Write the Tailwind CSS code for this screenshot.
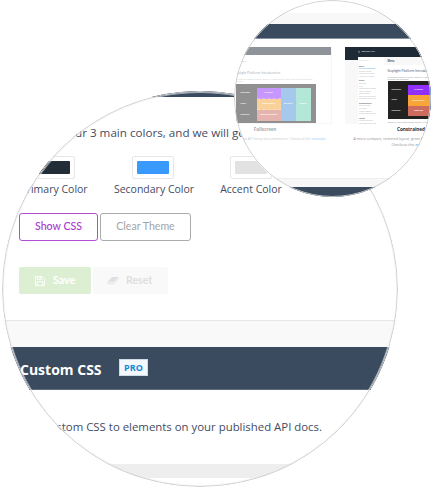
<!DOCTYPE html>
<html lang="en">
<head>
<meta charset="utf-8">
<title>Theme settings</title>
<script src="https://cdn.jsdelivr.net/npm/@tailwindcss/browser@4"></script>
</head>
<body class="bg-white w-[431px] h-[489px] overflow-hidden relative font-['Open_Sans','Noto_Sans',sans-serif] text-[#434c5f]">

<!-- Theme colours and custom CSS -->
<section class="absolute left-[2px] top-[91px] size-[396px] rounded-full overflow-hidden bg-white">
  <div class="flex flex-col w-[396px] whitespace-nowrap">
    <div class="h-[6px] bg-[#3a4b60]"></div>
    <p class="h-[59px] pt-[27px] pl-[19px] text-[11.65px] leading-[17px] flex"><span class="w-[54px] flex justify-end shrink-0">Pick yo</span><span>ur 3 main colors, and we will generate</span></p>
    <div class="flex gap-[26.5px] pl-[18.5px] h-[57px] text-[10.5px] leading-[16px]">
      <div class="w-[66px] flex flex-col items-center">
        <div class="w-[42px] h-[23px] border border-[#e6e6e6] rounded-[2px] p-[4px]"><div class="h-full rounded-[1px] bg-[#222d38]"></div></div>
        <span class="mt-[2px] pl-[1px]">Primary Color</span>
      </div>
      <div class="w-[80px] flex flex-col items-center">
        <div class="w-[42px] h-[23px] border border-[#e6e6e6] rounded-[2px] p-[4px]"><div class="h-full rounded-[1px] bg-[#3a99fc]"></div></div>
        <span class="mt-[2px] pl-[2px]">Secondary Color</span>
      </div>
      <div class="w-[62px] flex flex-col items-center">
        <div class="w-[42px] h-[23px] border border-[#e6e6e6] rounded-[2px] p-[4px]"><div class="h-full rounded-[1px] bg-[#e2e2e2]"></div></div>
        <span class="mt-[2px] pl-[1px]">Accent Color</span>
      </div>
    </div>
    <div class="flex gap-[2px] pl-[17px] h-[54px] font-['Lato',sans-serif] text-[10.6px]">
      <button class="w-[79px] h-[28px] rounded-[3px] border border-[#b04fd2] text-[#a937cd] font-medium">Show CSS</button>
      <button class="w-[91px] h-[28px] rounded-[3px] border border-[#a9abad] text-[#a3a5a8]">Clear Theme</button>
    </div>
    <div class="flex gap-[2px] pl-[17px] h-[53px] font-['Lato',sans-serif] text-[10.6px] font-bold">
      <button class="w-[72px] h-[27px] rounded-[2px] bg-[#dcefd2] text-white flex items-center pl-[16px] gap-[8px]">
        <svg class="size-[10px]" viewBox="0 0 10 10" fill="none" stroke="currentColor" stroke-width="0.9"><path d="M.6.6h6.5l2.3 2.3v6.5H.6zM2.6.6v2.8h4V.6M2.2 9.4V5.8h5.6v3.6M5.2 1.2v1.4"/></svg>
        <span>Save</span>
      </button>
      <button class="w-[75px] h-[27px] rounded-[2px] bg-[#f9f9f9] text-[#dedfe0] flex items-center pl-[14px] gap-[7px]">
        <svg class="w-[12px] h-[9px]" viewBox="0 0 12 9"><path d="M5 1h6L7 5.8H1z" fill="#dedfe0"/><path d="M1 5.8h6L11 1v2L7.2 7.8H1z" fill="none" stroke="#dedfe0" stroke-width=".8" stroke-linejoin="round"/></svg>
        <span>Reset</span>
      </button>
    </div>
    <div class="h-[26.5px] border-t border-t-[#e6e6e6] bg-[#f9f9f9]"></div>
    <header class="h-[43.5px] bg-[#3a4b60] border-b border-[#5b6a7d] flex items-center pl-[18px]">
      <h2 class="w-[99px] pt-[3px] text-[14px] font-bold text-white">Custom CSS</h2>
      <span class="w-[29px] h-[17px] border border-[#cfdbe5] bg-[#f2f8fd] text-[#1489d2] text-[9px] leading-[15px] font-bold text-center">PRO</span>
    </header>
    <p class="h-[74px] pt-[28px] flex text-[11.4px] leading-[18px]"><span class="w-[320px] flex justify-end shrink-0">Add custom CSS to elements on your published API docs.</span></p>
    <div class="h-[14px] bg-[#eeeeee]"></div>
  </div>
  <div class="absolute inset-0 rounded-full border-[1.5px] border-[#d0d0d0] inset-ring inset-ring-[#eeeeee]/60"></div>
</section>

<!-- Layout picker -->
<section class="absolute left-[233.5px] top-0 size-[197px] rounded-full overflow-hidden bg-white">
  <div class="flex flex-col whitespace-nowrap">
    <div class="mt-[13px] h-[11px] bg-[#f8f8f8]"></div>
    <div class="h-[14.5px] bg-[#3a4b60] border-b border-[#8793a1]"></div>
    <div class="flex gap-[13px] mt-[8px] -ml-[35px] w-[280px] h-[131.5px]">

      <article class="w-[133px] shrink-0 opacity-50 flex flex-col">
        <div class="h-[77px] border-r border-b border-[#eeeeee] flex flex-col">
          <div class="h-[8.5px] bg-[#1f2a37] shrink-0"></div>
          <div class="pl-[37px] flex flex-col">
            <span class="mt-[4px] pl-[3px] text-[2.5px] leading-[5px]">Menu</span>
            <span class="mt-[6px] -ml-[3px] text-[3.3px] leading-[6px]">Stoplight Platform Introduction</span>
            <span class="mt-[2px] text-[1.7px] leading-[2px] text-[#8b8f96]">The Stoplight Platform is an open, modular API toolkit covering design, documentation and testing</span>
            <span class="text-[1.7px] leading-[2px] text-[#8b8f96]">workflow.</span>
            <div class="mt-[1.5px] w-[80px] h-[39px] bg-[#222222] pt-[4px] flex">
              <div class="w-[21px] h-[33px] flex flex-col justify-around pl-[5px] text-[1.3px] leading-[2px] font-bold text-white">
                <span>DEVELOPMENT</span><span>TESTING</span><span>PRODUCTION</span>
              </div>
              <div class="w-[24px] h-[33px] grid grid-rows-3 text-[1.5px] leading-none text-white text-center font-bold">
                <div class="bg-[#9130fc] flex items-center justify-center border-b border-dashed border-white/30">API DESIGN</div>
                <div class="bg-[#f7a438] flex items-center justify-center border-b border-dashed border-white/30">Scenario Testing</div>
                <div class="bg-[#cd6b5f] flex items-center justify-center">Hosted Documentation</div>
              </div>
              <div class="w-[15px] h-[33px] bg-[#4c91dc] flex items-center justify-center text-[1.3px] text-white font-bold">Mock Servers</div>
              <div class="w-[15px] h-[33px] bg-[#68cfb0] flex items-center justify-center text-[1.3px] text-white font-bold">Monitoring</div>
            </div>
          </div>
        </div>
        <h3 class="text-center mt-[2px] text-[4.4px] leading-[6px] font-bold">Fullscreen</h3>
        <p class="text-center mt-[4px] text-[3.4px] leading-[6px] text-[#8b8f96]">Great for large screens and API heavy documentation. Checkout this <span class="text-[#2496ef]">example.</span></p>
      </article>

      <article class="w-[133px] shrink-0 flex flex-col">
        <div class="h-[77px] bg-[#f8f8f8] flex flex-col">
          <div class="h-[10.5px] bg-[#1f2a37] shrink-0 flex items-center gap-[2px] pl-[13px] text-white text-[2px]">
            <svg class="w-[2px] h-[4px]" viewBox="0 0 2 4"><path d="M1.2 0 .2 2.2H1L.6 4 1.9 1.6H1z" fill="#aeb6bf"/></svg>
            <span>Stoplight Help</span>
          </div>
          <div class="flex grow">
            <div class="w-[13px] shrink-0"><div class="h-[2.5px] bg-[#1f2a37]"></div></div>
            <div class="w-[26px] shrink-0 bg-white pl-[1.5px] pt-[2px] text-[1.6px] leading-[2.57px] text-[#a9aeb5]">
              <div class="flex justify-between pr-[2px] text-[#c9ccd0]"><span>Filter sidebar</span><span>×</span></div>
              <div class="mt-[3px] font-bold text-[#5b646f]">Basics</div>
              <div class="text-[#2496ef]">Platform Introduction</div>
              <div>Quickstart Guide</div>
              <div>Creating Your Project</div>
              <div>Working With Teams</div>
              <div class="mt-[2px] font-bold text-[#5b646f]">Design</div>
              <div>Overview</div>
              <div>Files</div>
              <div>Collaborating on specs</div>
              <div>Using the editor</div>
              <div>JSON schemas</div>
              <div>Reuse and inheritance</div>
              <div>Referencing other files</div>
              <div class="mt-[2px] font-bold text-[#5b646f]">Documentation</div>
              <div>Getting started</div>
              <div>Publishing</div>
              <div>Custom domains</div>
              <div>Theming and variables</div>
              <div class="mt-[2px] font-bold text-[#5b646f]">Testing</div>
              <div>Running scenarios</div>
              <div>Continuous integration</div>
            </div>
            <div class="w-[94px] shrink-0 bg-white flex flex-col">
              <div class="h-[8px] bg-[#f8f8f8] pl-[4px] text-[2.5px] leading-[8px] font-semibold text-[#222d38]">Menu</div>
              <div class="pl-[4px] flex flex-col">
                <span class="mt-[3px] text-[3.2px] leading-[6px]">Stoplight Platform Introduction</span>
                <span class="mt-[2px] text-[1.7px] leading-[2px] text-[#8b8f96]">The Stoplight Platform is an open, modular API toolkit covering</span>
                <span class="text-[1.7px] leading-[2px] text-[#8b8f96]">design and documentation.</span>
                <div class="mt-[1px] w-[80px] h-[38px] bg-[#222222] pt-[4px] flex">
                  <div class="w-[20px] shrink-0 h-[31px] flex flex-col justify-around pl-[4px] text-[1.3px] leading-[2px] font-bold text-white">
                    <span>DEVELOPMENT</span><span>TESTING</span><span>PRODUCTION</span>
                  </div>
                  <div class="w-[22px] h-[31px] grid grid-rows-3 text-[1.5px] leading-none text-white text-center font-bold">
                    <div class="bg-[#9130fc] flex items-center justify-center">API DESIGN</div>
                    <div class="bg-[#f7a438] flex items-center justify-center">Scenario Testing</div>
                    <div class="bg-[#cd6b5f] flex items-center justify-center">Hosted Docs</div>
                  </div>
                  <div class="w-[15px] h-[31px] bg-[#4c91dc]"></div>
                </div>
                <span class="mt-[1.5px] text-[1.7px] leading-[3px] text-[#8b8f96]">Stoplight is a set of tools that work together, or on their own</span>
              </div>
            </div>
          </div>
        </div>
        <h3 class="text-center mt-[2px] text-[4.6px] leading-[6px] font-bold text-[#222d38]">Constrained</h3>
        <p class="text-center mt-[4px] text-[3.6px] leading-[6px] text-[#8b8f96]">A more compact, centered layout, great for most written documents.<br>Checkout this <span class="text-[#2496ef]">example.</span></p>
      </article>
    </div>
    <div class="h-[9px] bg-[#f7f7f7] border-t border-[#eeeeee]"></div>
    <div class="h-[12px] bg-[#3a4b60]"></div>
  </div>
  <div class="absolute inset-0 rounded-full border border-[#cccccc]"></div>
</section>
</body>
</html>
